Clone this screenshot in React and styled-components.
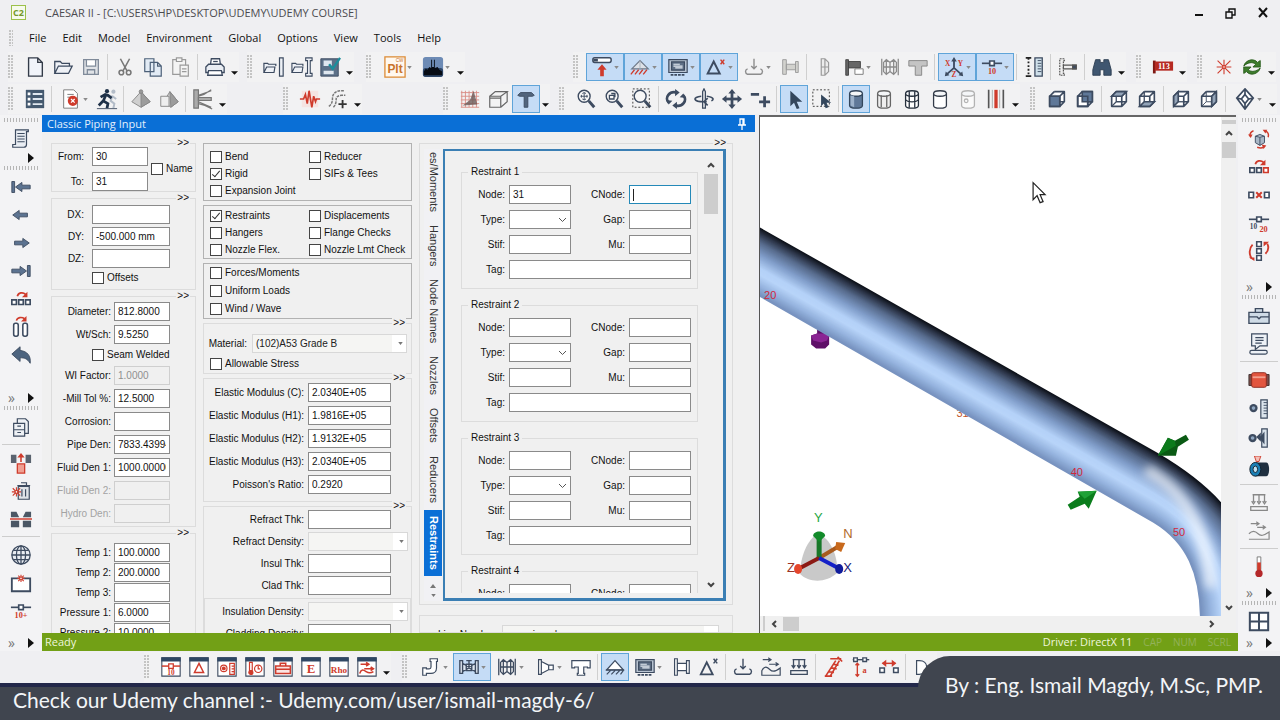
import React from "react";
import styled, { createGlobalStyle, css } from "styled-components";

const ink = "#3d4b60";
const red = "#cf3b2c";
const grey = "#9a9a9a";
const face = "#f0f0f0";
const blue = "#0a6fd6";
const formFont = '"Liberation Sans", Arial, sans-serif';
const uiFont = '"Open Sans", "Noto Sans", sans-serif';

const Global = createGlobalStyle`
  *, *::before, *::after { box-sizing: border-box; }
  body { margin: 0; background: #efeff2; overflow: hidden; }
  button, input, select { font: inherit; color: inherit; margin: 0; }
`;

/* ---------- icons ---------- */

const cube = (
  <g fill="#fff" stroke={ink} strokeWidth="1.8" strokeLinejoin="round">
    <path d="M4 9h11v11H4zM9 4h11v11h-5M4 9l5-5M15 9l5-5M15 20l5-5" />
  </g>
);
const cyl = (stroke, fill, extra) => (
  <g stroke={stroke} strokeWidth="1.4" fill={fill}>
    <path d="M5 6v13c0 1.600 3 3 7 3s7-1.400 7-3V6" />
    <ellipse cx="12" cy="6" rx="7" ry="3" fill="#f4f6f8" />
    {extra}
  </g>
);
const lens = (inner) => (
  <g fill="none" stroke={ink}>
    <circle cx="10" cy="9" r="6.500" strokeWidth="1.500" fill="#f6f6f6" />
    <path d="M15 14l6 7" strokeWidth="3.200" />
    {inner}
  </g>
);
const sheet = (inner) => (
  <g>
    <path d="M2 2h20v20H2z" fill="#fff" stroke={ink} strokeWidth="1.200" />
    <path d="M1.400 1.400h21.200v4.600H1.400z" fill="#2f4764" />
    {inner}
  </g>
);
const squares = (last = ink) => (
  <g fill="#fff" strokeWidth="1.800">
    <path d="M2 13h5v5H2zM9.500 13h5v5h-5z" stroke={ink} />
    <path d="M17 13h5v5h-5z" stroke={last} />
  </g>
);
const letter = (x, y, size, fill, text) => (
  <text x={x} y={y} fontSize={size} fontWeight="700" fill={fill} textAnchor="middle" fontFamily="Liberation Serif, serif">
    {text}
  </text>
);
const screen = (c) => (
  <g stroke={c} fill="none" strokeWidth="1.300">
    <path d="M2 4h20v14H2z" fill="#b9c4d2" />
    <path d="M5 6.500h14v9H5z" fill="#5f7086" />
    <path d="M7 9h7M7 11h10M9 13h8" stroke="#e3e9f1" />
    <path d="M4 20.500h16" strokeWidth="2" strokeDasharray="3 1" />
  </g>
);
const hatch = (
  <g fill="none">
    <path d="M3 14 12 5l9 9z" fill="#dde1e7" stroke="#6d7888" strokeWidth="1.300" />
    <path d="M12 5v9" stroke="#a8b0bb" />
    <path d="M2 20l4-5M6.500 20l4-5M11 20l4-5M15.500 20l4-5" stroke={red} strokeWidth="1.400" />
  </g>
);
const forceDown = (c) => (
  <g fill="none" stroke={c} strokeWidth="1.500">
    <path d="M12 3v11M9 11l3 3 3-3M5 14c-3 1-3 5 0 6h14c3-1 3-5 0-6" />
    <path d="M5 20h14" />
  </g>
);
const bellows = (c) => (
  <g fill="none" stroke={c} strokeWidth="1.400">
    <path d="M3 3v18M21 3v18M5 7l3-3 4 3 4-3 3 3v10l-3 3-4-3-4 3-3-3zM5 12h14M8 4v16M12 7v10M16 4v16" />
  </g>
);
const node = (
  <g>
    <path d="M1 8h22" stroke={ink} strokeWidth="1.800" />
    <path d="M9.500 5.500h5v5h-5z" fill="#fff" stroke={ink} strokeWidth="1.800" />
  </g>
);
const arrowL = <path d="M3 12l7-5v3h9v4h-9v3z" fill="#5c7391" stroke={ink} />;
const arrowR = <path d="M21 12l-7-5v3H5v4h9v3z" fill="#5c7391" stroke={ink} />;
const burst = (cx, cy, r) => (
  <g stroke={red} strokeWidth="1.200">
    <path d={`M${cx - r} ${cy}h${2 * r}M${cx} ${cy - r}v${2 * r}M${cx - r + 1} ${cy - r + 1}l${2 * r - 2} ${2 * r - 2}M${cx - r + 1} ${cy + r - 1}l${2 * r - 2} ${2 - 2 * r}`} />
    <circle cx={cx} cy={cy} r="1.500" fill="#fff" />
  </g>
);
const hook = (
  <g>
    <path d="M8 9c1-4 6-5 9-2" fill="none" stroke={red} strokeWidth="1.800" />
    <path d="M19 4v6h-6z" fill={red} />
  </g>
);

const icons = {
  new: <path d="M5 2h10l5 5v15H5zM15 2v5h5" fill="#f1f4fa" stroke="#333b48" strokeWidth="1.500" />,
  open: <path d="M3 19V6h6l2 2h8v3M3 19l4-8h15l-4 8z" fill="#eef1f6" stroke={ink} strokeWidth="1.400" />,
  save: (
    <g fill="#dfe2e6" stroke="#7f8a99" strokeWidth="1.400">
      <path d="M4 4h16v16H4z" /><path d="M7 4h10v7H7z" fill="#fff" /><path d="M8 15h8v5H8z" />
    </g>
  ),
  cut: (
    <g fill="none" stroke="#777" strokeWidth="1.700">
      <path d="M7 3l7 13M17 3l-7 13" /><circle cx="8" cy="18" r="2.500" /><circle cx="16" cy="18" r="2.500" />
    </g>
  ),
  copy: <path d="M3 3h10v14H3zM9 7h8l4 4v11H9zM17 7v4h4" fill="#e2ebf5" stroke="#4c6078" strokeWidth="1.300" />,
  paste: (
    <g stroke={grey} strokeWidth="1.300" fill="#f4f4f4">
      <path d="M3 4h14v16H3z" /><path d="M7 2h6v4H7z" /><path d="M11 10h9v12h-9z" /><path d="M13 14h5M13 17h5" />
    </g>
  ),
  print: (
    <g stroke={ink} strokeWidth="1.400" fill="#e9edf3">
      <path d="M7 10 8 3h9l1 7" fill="#fff" /><path d="M2 12l3-3h14l3 3v6H2z" /><path d="M5 16h14l1 5H4z" fill="#fff" /><path d="M10 6h5" />
    </g>
  ),
  openPipe: <path d="M1 18V8h4l1 1h8v2M1 18l3-6h9l-1 6zM18 2h4v20h-4z" fill="#eef1f6" stroke={ink} strokeWidth="1.300" />,
  openBeam: <path d="M1 18V8h4l1 1h7v2M1 18l3-6h9l-1 6zM16 2h7v3h-2v14h2v3h-7v-3h2V5h-2z" fill="#eef1f6" stroke={ink} strokeWidth="1.200" />,
  diskCheck: (
    <g>
      <path d="M2 3h19v19H2z" fill="#5d7188" stroke={ink} /><path d="M5 5h9v6H5zM5 16h11v4H5z" fill="#dfe7ef" />
      <path d="M11 9l4 5 8-12" fill="none" stroke="#1b8e9c" strokeWidth="2.600" />
    </g>
  ),
  plt: (
    <g>
      <path d="M1 1h22v22H1z" fill="#fff8ef" stroke="#dc8a35" strokeWidth="1.400" />
      <text x="12" y="18" fontSize="13" fontWeight="700" fill="#c9742a" textAnchor="middle" fontFamily="Liberation Sans, sans-serif">Plt</text>
      <text x="17" y="7" fontSize="5" fill="#c9742a" textAnchor="middle" fontFamily="Liberation Sans, sans-serif">CW</text>
    </g>
  ),
  skyline: (
    <g>
      <rect x="1" y="1" width="22" height="22" rx="3" fill="#6d8bb5" />
      <rect x="1" y="13" width="22" height="10" rx="3" fill="#30486a" />
      <path d="M2 17l2-3 2 1 2-3 2 1V4h1v8h2V4h1v9l3-1 2 3 3 2v4H2z" fill="#070c14" />
    </g>
  ),
  loadUp: (
    <g>
      <rect x="2" y="2" width="20" height="5" rx="2" fill="#fff" stroke={ink} strokeWidth="1.600" /><path d="M2.500 3h5v3h-5z" fill={ink} />
      <path d="M12 9l5 6h-3v7h-4v-7H7z" fill={red} />
    </g>
  ),
  hatch,
  screen: screen(ink),
  delta: (
    <g>
      <path d="M3 19 9.500 6l6.500 13z" fill="none" stroke={ink} strokeWidth="2.200" /><path d="M17 4l4 5M21 4l-4 5" stroke={red} strokeWidth="1.600" />
    </g>
  ),
  forceGrey: forceDown("#8d8d8d"),
  force: forceDown(ink),
  flangeGrey: <path d="M4 4h4v16H4zM8 9h10v6H8zM18 6h3v12h-3z" fill="#d2d2ce" stroke={grey} />,
  disc: <path d="M9 3h4l4 4v10l-4 4H9zM13 3v18M9 12h8" fill="#ececec" stroke={grey} strokeWidth="1.300" />,
  valveBox: (
    <g>
      <path d="M3 4h3v17H3zM6 6h13v7H6z" fill="#666" stroke="#444" /><path d="M13 14h9v6h-9z" fill="#fff" stroke="#777" />
    </g>
  ),
  bellowsGrey: bellows("#8b8b8b"),
  bellows: bellows(ink),
  teeGrey: <path d="M2 5h20v6h-6v10H9V11H2z" fill="#c4c4c4" stroke="#868686" />,
  axes: (
    <g>
      <path d="M12 3v10M12 13l-8 7M12 13l8 7" stroke={ink} strokeWidth="2" /><path d="M12 1l3 5H9zM2 22l1-5 4 4zM22 22l-1-5-4 4z" fill={ink} />
      {letter(5, 11, 8, red, "X")}{letter(19, 11, 8, red, "Y")}{letter(12, 23, 8, red, "Z")}
    </g>
  ),
  node10: <g>{node}{letter(12, 20, 9, red, "10")}</g>,
  node10plus: <g>{node}{letter(12, 20, 9, red, "10+")}</g>,
  node1020: <g>{node}{letter(6, 19, 8, ink, "10")}{letter(17, 22, 9, red, "20")}</g>,
  ruler: (
    <g>
      <path d="M6 2v20" stroke="#222" strokeWidth="2" strokeDasharray="2 2" /><path d="M3 2h6M3 22h6" stroke="#222" strokeWidth="2" />
      <path d="M13 2h8v20h-8z" fill="#cfe0ea" stroke={ink} strokeWidth="1.400" /><path d="M16 5h4M16 8h4M16 11h4M16 14h4M16 17h4" stroke={ink} />
    </g>
  ),
  beam: (
    <g stroke="#555" strokeWidth="1.300" fill="#eee">
      <path d="M3 3h5v2H7v14h1v2H3z" strokeDasharray="2 1" /><path d="M7 10h14v4H7z" /><path d="M17 10h4v4h-4z" fill={ink} />
    </g>
  ),
  binoc: <path d="M5 4h5v3h4V4h5l3 11v6h-8v-6h-4v6H2v-6z" fill="#3f5670" stroke="#2d3e52" />,
  tag113: (
    <g>
      <path d="M1 5h3v14H1z" fill="#7e1813" /><path d="M3 6h20v10H3z" fill="#b62a22" />
      {letter(13, 14, 9, "#fff", "113")}
    </g>
  ),
  spark: <g>{burst(12, 12, 8)}</g>,
  refresh: (
    <g fill="#3d7d2c" stroke="#2a5c1c">
      <path d="M3 11c2-7 11-9 15-4l3-2v7h-8l3-3C13 6 7 7 3 11z" /><path d="M21 13c-2 7-11 9-15 4l-3 2v-7h8l-3 3c3 3 9 2 13-2z" />
    </g>
  ),
  list: (
    <g>
      <path d="M2 2h20v20H2z" fill="#44596f" /><path d="M4 5h3v3H4zM4 10.500h3v3H4zM4 16h3v3H4z" fill="#fff" />
      <path d="M9.500 6.500H20M9.500 12H20M9.500 17.500H20" stroke="#dfe7ef" strokeWidth="2" />
    </g>
  ),
  docError: (
    <g>
      <path d="M4 2h11l4 4v16H4zM8 7h7M8 10h7" fill="#fff" stroke="#777" /><circle cx="14" cy="14" r="5.500" fill={red} />
      <path d="M12 12l4 4M16 12l-4 4" stroke="#fff" strokeWidth="1.400" />
    </g>
  ),
  run: (
    <g>
      <g stroke="#b3bcc8" fill="none" strokeWidth="2.200"><circle cx="19" cy="4" r="1.200" /><path d="M18 8l-2 6 4 3-1 5M18 9l4 3" /></g>
      <circle cx="12" cy="3.500" r="2.300" fill="#1f3148" />
      <path d="M11 7 8 14l5 3-1 5M8 14l-5 5M5 10l5-3 3 1 4 3" fill="none" stroke="#1f3148" strokeWidth="3" />
      <path d="M1 22.500h22" stroke={ink} />
    </g>
  ),
  pyramid: <g stroke="#858585"><path d="M12 4 2 15l10 6 10-6z" fill="#cfcfcf" /><path d="M12 4v17l10-6z" fill="#9c9c9c" /><circle cx="12" cy="4" r="2" fill="#999" /></g>,
  pyramidBox: <g stroke="#858585"><path d="M13 4 6 15l8 6 8-6z" fill="#cfcfcf" /><path d="M13 4l1 17 8-6z" fill="#9c9c9c" /><path d="M3 9h9v11H3z" fill="#eee" /></g>,
  anchor: (
    <g fill="none" stroke="#777" strokeWidth="1.300">
      <path d="M2 2h5v20H2z" fill="#aaa" /><path d="M7 9l6-2 8-5M7 8l14-5M7 15l14 6M7 17l7 2 8 4" /><path d="M7 10.500h14v3H7z" fill="#bbb" />
    </g>
  ),
  wave: (
    <g fill="none">
      <path d="M3 3h18v18H3z" fill="#f5e4e2" /><path d="M1 12h4l2-5 2 10 2-14 3 18 2-12 2 6 1-3h4" stroke={red} strokeWidth="1.800" />
    </g>
  ),
  pipeAdd: (
    <g fill="none" stroke="#777">
      <path d="M2 20c3-2 4-5 4-9s3-8 9-8h4M7 21c3-3 3-7 3-9s2-4 6-4h4" strokeDasharray="3 1" strokeWidth="1.600" /><path d="M17 13v9M12.500 17.500h9" stroke="#333" strokeWidth="2" />
    </g>
  ),
  gridPen: (
    <g>
      <path d="M3 3v18M7 3v18M11 3v18M15 3v18M19 3v18M2 5h20M2 9h20M2 13h20M2 17h20M2 21h20" stroke="#d98d86" /><path d="M4 19 12 13 16 3l4 15z" fill="#6b5b5a" opacity="0.800" />
    </g>
  ),
  boxOpen: <path d="M3 9h12v12H3zM3 9l6-5h13l-7 5M22 4v11l-7 6M3 11h12" fill="#f3f3f3" stroke="#666" strokeWidth="1.300" />,
  teeDark: <path d="M3 8l3-3h12l3 3-2 1h-5v12h-4V9H5z" fill="#52657d" stroke={ink} />,
  zoomAll: lens(<path d="M10 5v8M6 9h8M8 6l2-1 2 1M8 12l2 1 2-1M7 7.500v3M13 7.500v3" />),
  zoomBox: lens(<path d="M7 8h5v4H7zM9 6h4v4" strokeWidth="1.400" />),
  zoomArea: <g>{lens(null)}<path d="M2 1h18v20H2z" fill="none" stroke="#333" strokeDasharray="2 2" /></g>,
  rotate: (
    <g fill="none" stroke={ink} strokeWidth="3">
      <path d="M4 16a8 7 0 0 1 9-11M20 8a8 7 0 0 1-9 11" /><path d="M11 1l5 4-5 4zM13 15l-5 4 5 4z" fill={ink} stroke="none" /><path d="M1 13l3 5 4-4zM23 11l-3-5-4 4z" fill={ink} stroke="none" />
    </g>
  ),
  orbit: (
    <g fill="none" stroke={ink} strokeWidth="1.800">
      <path d="M10.500 22V4L12 1l1.500 3v18z" strokeWidth="1.400" /><path d="M9 9c-10 1-9 6 3 6h3M15 9c8 1 8 4 5 5M16 11l-4 4 4 4" />
    </g>
  ),
  pan: (
    <g fill={ink}>
      <path d="M12 1l4 5H8zM12 23l4-5H8zM1 12l5-4v8zM23 12l-5-4v8z" /><path d="M10.500 5h3v14h-3z" /><path d="M5 10.500h14v3H5z" />
    </g>
  ),
  plusMinus: <path d="M2 7h9M17 9v12M11 15h12" stroke={ink} strokeWidth="3" />,
  cursor: <path d="M8 3v17l4-4 3 7 3-1-3-7h6z" fill="#33465c" />,
  cursorBox: <g><path d="M2 2h18v18H2z" fill="none" stroke="#333" strokeDasharray="2 2" /><path d="M11 7v13l3-3 2 5 3-1-2-5h5z" fill="#33465c" /></g>,
  cylSolid: <g>{cyl("#33465c", "#5f7898", <path d="M6 8v11l4 2V9z" fill="#9db2ca" stroke="none" />)}</g>,
  cylLines: cyl("#666", "#eee", <path d="M9 8v13M15 8v13" />),
  cylWire: cyl("#26303d", "#fff", <path d="M9 3.500v18M15 3.500v18M5 13c3 3 11 3 14 0" fill="none" />),
  cylOpen: cyl("#333b48", "#fff", null),
  cylDot: cyl("#b3b3b3", "#fafafa", <circle cx="10" cy="14" r="2" />),
  bars: (
    <g>
      <path d="M4 2v20M20 2v20" stroke="#555" strokeWidth="1.800" /><path d="M12 2v20" stroke={red} strokeWidth="3.600" /><path d="M16 2v20M8 2v20" stroke="#aaa" />
    </g>
  ),
  cubeFront: <g>{cube}<path d="M4 9h11v11H4z" fill="#5f7898" stroke={ink} strokeWidth="1.800" /></g>,
  cubeBack: <g>{cube}<path d="M9 4h11v11H9z" fill="#5f7898" stroke={ink} strokeWidth="1.800" /><path d="M4 9h11v11H4z" fill="none" stroke={ink} strokeWidth="1.800" /></g>,
  cubeTop: <g>{cube}<path d="M4 9l5-5h11l-5 5z" fill="#93a4b8" stroke={ink} strokeWidth="1.800" /><path d="M9 9v6h6M4 20l5-5" fill="none" stroke={ink} strokeWidth="1.400" /></g>,
  cubeBottom: <g>{cube}<path d="M4 20l5-5h11l-5 5z" fill="#93a4b8" stroke={ink} strokeWidth="1.800" /><path d="M9 4v11" stroke={ink} strokeWidth="1.400" /></g>,
  cubeLeft: <g>{cube}<path d="M4 9l5-5v11l-5 5z" fill="#93a4b8" stroke={ink} strokeWidth="1.800" /><path d="M9 15h6" stroke={ink} strokeWidth="1.400" /></g>,
  cubeRight: <g>{cube}<path d="M15 9l5-5v11l-5 5z" fill="#93a4b8" stroke={ink} strokeWidth="1.800" /><path d="M9 4v11h6M4 20l5-5" fill="none" stroke={ink} /></g>,
  cubeIso: <g fill="#fff" stroke={ink} strokeWidth="1.800"><path d="M12 1l9 10-9 12-9-12zM12 1v6M12 17v6M3 11l5 1M21 11l-5 1" /><path d="M12 7l4 5-4 5-4-5z" /></g>,
  sheetNode: sheet(<g><path d="M2 11h20" stroke={red} strokeWidth="1.600" /><path d="M9.500 8.500h5v5h-5z" fill="#fff" stroke={red} strokeWidth="1.400" />{letter(12, 21, 8, red, "10")}</g>),
  sheetDelta: sheet(<path d="M7 18l5-10 5 10z" fill="none" stroke={red} strokeWidth="1.600" />),
  sheetDot: sheet(<g stroke={red} fill="none" strokeWidth="1.300"><circle cx="8.500" cy="13.500" r="3.500" /><circle cx="8.500" cy="13.500" r="1.500" fill={red} /><path d="M15 8h5v12h-5zM17 11h3M17 14h3M17 17h3" /></g>),
  sheetTherm: sheet(<g stroke={red} fill="none" strokeWidth="1.300"><path d="M6 7h3v9H6z" /><circle cx="7.500" cy="18" r="2.200" fill={red} /><circle cx="15.500" cy="14" r="4" /><path d="M15.500 11v3h2" /></g>),
  sheetCase: sheet(<path d="M4 11h16v8H4zM9 11V8h6v3M4 14.500h16" fill="#fbe4e1" stroke={red} strokeWidth="1.600" />),
  sheetE: sheet(letter(12, 19, 14, red, "E")),
  sheetRho: sheet(letter(12, 18, 10, red, "Rho")),
  sheetWind: sheet(<path d="M5 9h9M11 7l3 2-3 2M9 14h10M16 12l3 2-3 2M4 19c2-5 4-4 7-2s5 2 8 0" fill="none" stroke={red} strokeWidth="1.700" />),
  elbow: <path d="M11 3h8v3h-1v7c0 4-3 6-6 6H7v2H3v-8h4v1h3c1 0 2-1 2-2V6h-1z" fill="#fff" stroke={ink} strokeWidth="1.300" />,
  valve: <path d="M2 5h3v14H2zM19 5h3v14h-3zM5 8l7 4 7-4v9l-7-4-7 4zM12 5v8M9 5h6M9 9h6v7H9z" fill="#dfe7f0" stroke={ink} strokeWidth="1.500" />,
  reducer: <path d="M5 4h3v16H5zM8 6l8 4v5l-8 4zM16 10h5v5h-5" fill="#fff" stroke={ink} strokeWidth="1.300" />,
  tee: <path d="M2 5h20v8h-3v-1h-4v7h1v2H8v-2h1v-7H5v1H2z" fill="#fff" stroke={ink} strokeWidth="1.300" />,
  support: <g fill="none" stroke={ink} strokeWidth="1.300"><path d="M3 15 12 5l9 10z" fill="#fff" /><path d="M2 15.500h20M3 20l4-4M8 20l4-4M13 20l4-4M18 20l3-4" /></g>,
  flange: <path d="M5 3h3v18H5zM8 8h10v8H8zM18 5h3v14h-3z" fill="#fff" stroke={ink} strokeWidth="1.300" />,
  deltaDark: <g fill="none" stroke={ink}><path d="M3 20 9.500 7l6.500 13z" strokeWidth="2" /><path d="M17 3l4 5M21 3l-4 5" strokeWidth="1.600" /></g>,
  wind: <path d="M3 4h8M9 2l3 2-3 2M10 9h9M17 7l3 2-3 2M2 16c3-6 6-4 9-1s6 2 11-2v8H2z" fill="none" stroke={ink} strokeWidth="1.300" />,
  windGrey: <path d="M3 4h9M9 2l3 2-3 2M10 8h9M16 6l3 2-3 2M1 15c4-4 7-3 10 0s6 2 12-2v8H1" fill="none" stroke="#888" strokeWidth="1.300" />,
  loads: <path d="M5 4h14M6 4v8M12 4v8M18 4v8M4 10l2 3 2-3M10 10l2 3 2-3M16 10l2 3 2-3M3 16h18v4H3z" fill="none" stroke={ink} strokeWidth="1.400" />,
  loadsGrey: <path d="M5 3h14M6 3v8M12 3v8M18 3v8M4 10l2 3 2-3M10 10l2 3 2-3M16 10l2 3 2-3M3 16h18v4H3z" fill="none" stroke="#888" strokeWidth="1.400" />,
  slash: <path d="M4 22 15 5M9 22 19 5M3 22h8M7 17l6 1M10 13l6 1M12 9l6 1M9 3h12M17 1l5 5" fill="none" stroke={red} strokeWidth="1.800" />,
  measure: <g fill="none" strokeWidth="1.500"><path d="M3 4h18" stroke={ink} /><path d="M4 2h4v4H4zM14 2h4v4h-4z" fill="#fff" stroke={ink} /><path d="M8 8v14M6 10l2-2 2 2M6 20l2 2 2-2" stroke={red} />{letter(16, 19, 9, red, "a")}</g>,
  nodesRed: <g fill="#fff" strokeWidth="1.600"><path d="M2 13h5v5H2zM17 13h5v5h-5z" stroke={ink} /><path d="M5 8h14" stroke={red} /><path d="M9 4v8L4 8zM15 4v8l5-4z" fill={red} /></g>,
  valveEnd: <path d="M5 5h3c5 0 8 3 8 7s-3 8-8 8H5z" fill="#fff" stroke={ink} strokeWidth="1.300" />,
  scroll: <path d="M6 2h14v2h-2v14c0 2-1 3-3 3H3v-3h3zM8 6h8M8 9h8M8 12h8M8 15h8" fill="#e9edf3" stroke={ink} strokeWidth="1.300" />,
  first: <g><path d="M2 6h3v12H2z" fill="#5c7391" stroke={ink} /><g transform="translate(3 0)">{arrowL}</g></g>,
  prev: arrowL,
  next: arrowR,
  last: <g><path d="M19 6h3v12h-3z" fill="#5c7391" stroke={ink} /><g transform="translate(-3 0)">{arrowR}</g></g>,
  nodesJump: <g>{squares()}{hook}</g>,
  nodesJumpRed: <g>{squares(red)}{hook}</g>,
  nodesX: <g strokeWidth="1.800"><path d="M1 9h5v6H1zM18 9h5v6h-5z" fill="#fff" stroke={ink} /><path d="M9 9l6 6M9 15l6-6" stroke={red} strokeWidth="2.200" /></g>,
  tubesJump: <g><rect x="4" y="8" width="5" height="14" rx="2" fill="#fff" stroke={ink} strokeWidth="1.700" /><rect x="14" y="8" width="5" height="14" rx="2" fill="#fff" stroke={ink} strokeWidth="1.700" /><path d="M7 5c1-4 6-4 9-2" fill="none" stroke={red} strokeWidth="1.700" /><path d="M18 0v6h-6z" fill={red} /></g>,
  undo: <path d="M2 11l9-8v4c8 1 12 6 11 14-3-5-6-6-11-6v4z" fill="#4d647f" stroke={ink} />,
  cabinet: <path d="M4 8h12v14H4zM8 8V3h9l3 3v13h-4M4 15h12M8 11h4M8 18h4" fill="#eef1f5" stroke={ink} strokeWidth="1.300" />,
  insert: <g><path d="M1 3h6v9H1zM17 3h6v9h-6z" fill="#5a636f" /><path d="M12 4v7" stroke={red} strokeWidth="1.700" /><path d="M12 1l4 5H8z" fill={red} /><path d="M8 13h8v10H8z" fill="#f0a093" stroke={red} strokeWidth="1.400" /></g>,
  trash: <g><path d="M9 7h12v14H9zM8 6h14M12 3h6v3M13 10v8M17 10v8" fill="#dfe3e8" stroke={ink} strokeWidth="1.300" />{burst(7, 13, 5)}</g>,
  split: <g><path d="M1 4h6l3 6H1zM14 10l3-6h6v6zM1 14h9v7H1zM14 14h9v7h-9z" fill="#4b5765" /><path d="M0 12h24" stroke={red} strokeWidth="1.600" /></g>,
  globe: <g fill="#e8ecf2" stroke={ink} strokeWidth="1.400"><circle cx="12" cy="12" r="10" /><path d="M12 2v20M2 12h20M4 7h16M4 17h16" /><ellipse cx="12" cy="12" rx="5" ry="10" fill="none" /></g>,
  boxSpark: <g><path d="M2 7h20v14H2z" fill="#fff" stroke={ink} strokeWidth="2" />{burst(12, 7, 4)}</g>,
  rotCube: (
    <g fill="none">
      <path d="M8 9l5-2 5 2v7l-5 3-5-3zM13 10v9M8 9l5 1 5-1" fill="#a9b7c6" stroke={ink} />
      <path d="M6 3C3 4 2 6 2 9M18 3c4 1 5 4 4 7M10 21c3 1 5 1 7 0" stroke={red} strokeWidth="1.600" />
      <path d="M0 7h5l-2 4zM16 2h5l-2 4zM15 18l5 1-3 4z" fill={red} />
    </g>
  ),
  nodesVert: <g fill="#fff" strokeWidth="1.700"><path d="M9.500 2h5v5h-5zM9.500 9.500h5v5h-5zM9.500 17h5v5h-5z" stroke={ink} /><path d="M5 5c-4 4-4 11-1 15M19 15c3-3 4-7 2-11" fill="none" stroke={red} strokeWidth="2" /><path d="M1 19h6v4zM17 7V2h6z" fill={red} /></g>,
  briefcase: <path d="M1 8h22v12H1zM8 8V4h8v4M1 13h9l2 2 2-2h9" fill="#cfdbe6" stroke={ink} strokeWidth="1.500" />,
  speech: <g fill="#edf1f6" stroke={ink} strokeWidth="1.300"><path d="M4 1h17v13H13l-5 4v-4H4z" /><path d="M8 5h9M8 8h9M8 11h7" /><rect x="2" y="19" width="19" height="4" rx="2" /></g>,
  pipeRed: <g><path d="M1 6h4v12H1zM19 6h4v12h-4z" fill="#7d4a47" stroke="#3d3030" /><rect x="4" y="4" width="16" height="16" rx="2" fill="#e2553f" stroke="#8b2b20" /><path d="M5 9h14" stroke="#f3a08f" strokeWidth="2" /></g>,
  dotRuler: <g><circle cx="6" cy="11" r="4.500" fill={ink} /><circle cx="6" cy="11" r="2" fill="#8ea6c0" /><path d="M14 2h7v20h-7z" fill="#dbe4ec" stroke={ink} strokeWidth="1.300" /><path d="M17 5h4M17 8h4M17 11h4M17 14h4M17 17h4" stroke={ink} /></g>,
  dotRuler2: <g><circle cx="5" cy="12" r="4.500" fill={ink} /><circle cx="5" cy="12" r="2" fill="#8ea6c0" /><path d="M15 2h6v20h-6z" fill="#dbe4ec" stroke={ink} strokeWidth="1.300" /><path d="M9 11l5-5v4l4-5v14l-4-5v2z" fill={ink} /></g>,
  pipeProbe: <g><path d="M7 0h7l-2 6H9z" fill="#f3c1ba" stroke={red} /><path d="M8 7h12c4 0 4 15 0 15H8z" fill="#1f2f40" /><ellipse cx="8" cy="14.500" rx="6" ry="7.500" fill="#1b7fb5" stroke="#101c28" /><ellipse cx="8" cy="14.500" rx="2.500" ry="3.500" fill="#bfe2f4" stroke="#101c28" /></g>,
  thermo: <g><path d="M10 1h4v14h-4z" fill="#fff" stroke="#777" /><path d="M10 7h4v9h-4z" fill={red} /><circle cx="12" cy="19" r="4" fill="#b4282a" /></g>,
  panes: <path d="M2 2h20v19H2zM12 2v19M2 11.500h20" fill="#fff" stroke={ink} strokeWidth="2.200" />,
};

const Glyph = styled.svg`
  display: block;
  flex: none;
  width: ${(p) => p.$w || 24}px;
  height: ${(p) => p.$h || 24}px;
`;

/* ---------- toolbars ---------- */

const Shell = styled.div`
  position: relative;
  display: flex;
  flex-direction: column;
  height: 100vh;
  min-width: 0;
  overflow: hidden;
  color: #111;
  font: 12px/16px ${uiFont};
`;
const TitleBar = styled.header`
  display: flex;
  align-items: center;
  flex: none;
  height: 25px;
  padding: 0 1px 0 11px;
  color: #4b4b4f;
`;
const AppMark = styled.span`
  width: 15px;
  height: 15px;
  border: 1px solid #9cc04a;
  background: #f6faec;
  color: #74982a;
  font: 700 9px/13px ${uiFont};
  text-align: center;
`;
const AppTitle = styled.h1`
  flex: 1;
  margin: 0 0 0 19px;
  font: 400 11px/16px ${uiFont};
  white-space: nowrap;
`;
const WindowButton = styled.button`
  display: grid;
  place-items: center;
  width: 32px;
  height: 24px;
  padding: 0;
  border: 0;
  background: none;
`;
const MenuBar = styled.nav`
  display: flex;
  align-items: center;
  flex: none;
  gap: 16px;
  height: 26px;
  padding-left: 9px;
  font: 11px/16px ${uiFont};
`;
const MenuGrip = styled.span`
  width: 4px;
  height: 16px;
  background: radial-gradient(circle at 1px 1px, #c4c4c4 1px, transparent 1px) 0 0 / 3px 3px;
`;
const MenuItem = styled.button`
  padding: 0;
  border: 0;
  background: none;
`;
const ToolRow = styled.div`
  display: flex;
  align-items: center;
  flex: none;
  height: 32px;
  padding-left: 8px;
  overflow: hidden;
`;
const ToolGroup = styled.div`
  display: flex;
  align-items: center;
  flex: none;
  height: 30px;
  margin-left: ${(p) => p.$space || 0}px;
  background: #f2f2f3;
`;
const Grip = styled.span`
  width: 13px;
  height: 24px;
  padding-right: 8px;
  background: radial-gradient(circle at 1px 1px, #c4c4c4 1px, transparent 1px) 0 0 / 3px 3px content-box;
`;
const ToolButton = styled.button`
  display: flex;
  align-items: center;
  justify-content: center;
  gap: 1px;
  width: ${(p) => (p.$caret ? 38 : 28)}px;
  height: 28px;
  padding: 0;
  border: 1px solid ${(p) => (p.$on ? "#5fa4d9" : "transparent")};
  background: ${(p) => (p.$on ? "#c5dcf6" : "none")};
`;
const Divider = styled.span`
  width: 6px;
  height: 26px;
  background: linear-gradient(#cfcfcf, #cfcfcf) 2px 0 / 1px 100% no-repeat;
`;
const MoreButton = styled.button`
  display: grid;
  place-items: end center;
  width: 10px;
  height: 24px;
  padding: 0 0 4px;
  border: 0;
  background: none;
`;

const Icon = ({ name, size = 22 }) => (
  <Glyph $w={size} $h={size} viewBox="0 0 24 24" aria-hidden="true">{icons[name]}</Glyph>
);
const Caret = ({ color = "#8a8a8a" }) => (
  <Glyph $w={5} $h={3} viewBox="0 0 6 4" aria-hidden="true"><path d="M0 0h6L3 4z" fill={color} /></Glyph>
);

/* "*" marks a pressed tool, "^" one with a drop-down arrow, "|" a divider, "v" the overflow arrow */
function Tools({ space, items }) {
  return (
    <ToolGroup $space={space} role="toolbar">
      <Grip />
      {items.split(" ").map((item, i) => {
        if (item === "|") return <Divider key={i} />;
        if (item === "v")
          return (
            <MoreButton key={i} aria-label="More buttons">
              <Glyph $w={7} $h={4} viewBox="0 0 8 4"><path d="M0 0h8L4 4z" fill="#111" /></Glyph>
            </MoreButton>
          );
        const name = item.replace(/[*^]/g, "");
        const caret = item.endsWith("^");
        return (
          <ToolButton key={i} aria-label={name} $on={item.startsWith("*")} $caret={caret}>
            <Icon name={name} />
            {caret && <Caret />}
          </ToolButton>
        );
      })}
    </ToolGroup>
  );
}

/* ---------- side rails ---------- */

const Middle = styled.div`
  display: flex;
  flex: 1;
  min-height: 0;
`;
const Rail = styled.aside`
  display: flex;
  flex-direction: column;
  align-items: center;
  flex: none;
  width: 42px;
  overflow: hidden;
  padding-bottom: 3px;
  background: #f3f3f5;
`;
const RailGrip = styled.span`
  flex: none;
  width: 34px;
  height: 10px;
  padding: 3px 0;
  background: repeating-linear-gradient(90deg, #b5b5b5 0 1px, transparent 1px 3px) content-box;
`;
const RailButton = styled.button`
  display: flex;
  align-items: center;
  justify-content: center;
  flex: none;
  width: 42px;
  height: ${(p) => (p.$tall ? 29 : 28)}px;
  padding: 0;
  border: 0;
  background: none;
`;
const RailDivider = styled.span`
  flex: none;
  width: 38px;
  height: 8px;
  background: linear-gradient(#cdcdcd, #cdcdcd) 0 3px / 100% 1px no-repeat;
`;
const RailMore = styled.button`
  display: flex;
  align-items: center;
  justify-content: ${(p) => (p.$single ? "flex-end" : "space-between")};
  flex: none;
  width: 26px;
  height: 10px;
  margin-top: ${(p) => p.$top};
  padding: 0;
  border: 0;
  background: none;
  color: #777;
  font: 14px/10px ${uiFont};
`;

function RailTools({ items }) {
  return items.map((item, i) => {
    if (item === "grip") return <RailGrip key={i} />;
    if (item === "|") return <RailDivider key={i} />;
    if (item.more)
      return (
        <RailMore key={i} $top={item.more} $single={item.single} aria-label="More buttons">
          {!item.single && <span>»</span>}
          <Glyph $w={6} $h={10} viewBox="0 0 6 10"><path d="M0 0l6 5-6 5z" fill="#111" /></Glyph>
        </RailMore>
      );
    return (
      <RailButton key={i} aria-label={item.name || item} $tall={item.tall}>
        <Icon name={item.name || item} />
      </RailButton>
    );
  });
}

const leftRail = [
  "grip", "scroll", { more: "0px", single: true }, "grip",
  "first", "prev", "next", "last", "nodesJump", "tubesJump", "undo", { more: "24px" }, "grip",
  "cabinet", "|", "insert", "trash", "split", "|", "globe", "boxSpark", "node10plus", { more: "auto" },
];
const rightRail = [
  "grip", "rotCube", "nodesJumpRed", "nodesX", "node1020", "nodesVert", { more: "17px" }, "grip",
  "briefcase", "speech", "|", "pipeRed", { name: "dotRuler", tall: true }, { name: "dotRuler2", tall: true },
  { name: "pipeProbe", tall: true }, "|", "loadsGrey", "windGrey", "|", "thermo", { more: "7px" }, "grip", "panes", { more: "auto" },
];

/* ---------- input form ---------- */

const Center = styled.main`
  display: flex;
  flex-direction: column;
  flex: 1;
  min-width: 0;
`;
const Workspace = styled.div`
  display: flex;
  flex: 1;
  gap: 4px;
  min-height: 0;
`;
const InputPanel = styled.section`
  display: flex;
  flex-direction: column;
  flex: none;
  width: 713px;
  background: ${face};
  color: #111;
  font: 10px/14px ${formFont};
`;
const PanelTitle = styled.h2`
  display: flex;
  align-items: center;
  justify-content: space-between;
  flex: none;
  height: 17px;
  margin: 0;
  padding: 0 8px 0 5px;
  background: ${blue};
  color: #e4f0fc;
  font: 400 11px/16px ${uiFont};
`;
const PanelBody = styled.div`
  display: flex;
  flex: 1;
  gap: 7px;
  min-height: 0;
  padding: 11px 22px 0 9px;
  overflow: hidden;
`;
const Column = styled.div`
  display: flex;
  flex-direction: column;
  flex: none;
  gap: ${(p) => p.$gap}px;
  width: ${(p) => p.$width}px;
`;
const Box = styled.div`
  position: relative;
  display: flex;
  flex-direction: column;
  flex: none;
  gap: ${(p) => p.$gap || 0}px;
  padding: ${(p) => p.$pad || "0"};
  border: 1px solid ${(p) => (p.$strong ? "#b2b2b2" : "#dcdcdc")};
`;
const Expand = styled.button`
  position: absolute;
  top: -7px;
  right: 5px;
  padding: 0 1px;
  border: 0;
  background: ${face};
  font: 10px/12px ${formFont};
`;
const FieldRow = styled.div`
  display: grid;
  grid-template-columns: ${(p) => p.$label}px auto;
  column-gap: ${(p) => p.$space || 4}px;
  align-items: center;
  justify-content: start;
  height: 19px;
`;
const Label = styled.label`
  text-align: right;
  white-space: nowrap;
  color: ${(p) => (p.$off ? "#a3a3a3" : "#111")};
`;
const TextBox = styled.input`
  width: ${(p) => (p.$width ? `${p.$width}px` : "100%")};
  height: 19px;
  padding: 0 3px;
  border: 1px solid #8a8a8a;
  border-radius: 0;
  background: #fff;
  outline: 0;
  ${(p) => p.$focus && css`
    border-color: #2489b8;
    background: linear-gradient(#222, #222) 3px 3px / 1px 12px no-repeat #fff;
  `}
  &:disabled { border-color: #cfcfcf; background: ${face}; color: #8f8f8f; }
`;
const SelectFrame = styled.span`
  display: grid;
  align-items: center;
  width: ${(p) => (p.$width ? `${p.$width}px` : "100%")};
  & > * { grid-area: 1 / 1; }
  & > svg { justify-self: end; margin-right: 4px; }
`;
const Select = styled.select`
  width: 100%;
  height: 19px;
  padding: 0 3px;
  appearance: none;
  border: 1px solid ${(p) => (p.$flat ? "#d8d8d8" : "#8a8a8a")};
  border-radius: 0;
  background: ${(p) => (p.$flat ? "linear-gradient(90deg, transparent calc(100% - 14px), #fff 0) #f5f5f3" : "#fff")};
  color: #222;
`;
const CheckLabel = styled.label`
  display: flex;
  align-items: center;
  gap: 3px;
  height: ${(p) => p.$height || 14}px;
  margin-left: ${(p) => p.$indent || 0}px;
  white-space: nowrap;
`;
const Tick = styled.input`
  display: grid;
  place-items: center;
  flex: none;
  width: 12px;
  height: 12px;
  appearance: none;
  border: 1px solid #444;
  background: #fff;
  &:checked::after {
    content: "";
    width: 4px;
    height: 8px;
    margin-top: -2px;
    border: solid #333;
    border-width: 0 1px 1px 0;
    transform: rotate(40deg);
  }
`;
const CheckGrid = styled.div`
  display: grid;
  grid-template-columns: 99px auto;
  justify-content: start;
`;
const NodeRow = styled.div`
  display: flex;
  align-items: center;
  gap: 3px;
`;
const Stack = styled.div`
  display: flex;
  flex-direction: column;
  gap: 6px;
`;

const Check = ({ text, height, indent, on }) => (
  <CheckLabel $height={height} $indent={indent}>
    <Tick type="checkbox" defaultChecked={on} />
    {text}
  </CheckLabel>
);
const Drop = ({ id, value = "", flat, width }) => (
  <SelectFrame $width={width}>
    <Select id={id} $flat={flat} defaultValue={value}><option>{value}</option></Select>
    {flat ? <Caret color="#777" /> : (
      <Glyph $w={9} $h={6} viewBox="0 0 9 6"><path d="M1 1l3.500 3.500L8 1" fill="none" stroke="#555" /></Glyph>
    )}
  </SelectFrame>
);
function Field({ label, value = "", col, space, width, off, select }) {
  const id = React.useId();
  return (
    <FieldRow $label={col} $space={space}>
      <Label htmlFor={id} $off={off && !value}>{label}</Label>
      {select ? <Drop id={id} value={value} flat width={width} /> : <TextBox id={id} defaultValue={value} disabled={off} $width={width} />}
    </FieldRow>
  );
}

const TabGroup = styled(Box)`
  flex: 1;
  flex-direction: row;
  gap: 1px;
  min-height: 0;
  padding: 5px 6px 3px 4px;
`;
const TabStrip = styled.div`
  display: flex;
  flex-direction: column;
  justify-content: flex-end;
  align-items: center;
  flex: none;
  width: 18px;
  gap: 1px;
  overflow: hidden;
  background: #f1f1f4;
`;
const Tab = styled.button`
  flex: none;
  width: 18px;
  padding: 6px 0;
  border: 0;
  background: ${(p) => (p.$on ? blue : "none")};
  color: ${(p) => (p.$on ? "#fff" : "#333")};
  font: ${(p) => (p.$on ? 700 : 400)} 11px/17px ${formFont};
  writing-mode: vertical-rl;
`;
const TabArrows = styled.div`
  display: flex;
  flex-direction: column;
  align-items: center;
  gap: 6px;
  padding: 7px 0 4px;
`;
const TabPage = styled.div`
  display: flex;
  flex: 1;
  gap: 5px;
  min-width: 0;
  padding: 6px 5px 5px 16px;
  border: solid #3b7fb4;
  border-width: 2px 3px 3px 2px;
`;
const RestraintList = styled.div`
  display: flex;
  flex-direction: column;
  flex: 1;
  gap: 10px;
  padding-top: 9px;
  overflow: hidden;
`;
const RestraintSet = styled.fieldset`
  flex: none;
  min-width: 0;
  margin: 0;
  padding: 7px 0 9px;
  border: 1px solid #dcdcdc;
`;
const Legend = styled.legend`
  margin-left: 6px;
  padding: 0 3px;
  line-height: 12px;
`;
const RestraintGrid = styled.div`
  display: grid;
  grid-template-columns: 43px 62px 50px 62px;
  gap: 6px 4px;
  align-items: center;
`;
const WideCell = styled.div`
  grid-column: span 3;
  display: grid;
`;
const LineBox = styled(Box)`
  height: 18px;
  overflow: hidden;
  padding-top: 9px;
`;

function Restraint({ number, nodeValue, focus }) {
  const id = React.useId();
  return (
    <RestraintSet>
      <Legend>Restraint {number}</Legend>
      <RestraintGrid>
        <Label htmlFor={id + "n"}>Node:</Label><TextBox id={id + "n"} defaultValue={nodeValue} />
        <Label htmlFor={id + "c"}>CNode:</Label><TextBox id={id + "c"} $focus={focus} />
        <Label htmlFor={id + "t"}>Type:</Label><Drop id={id + "t"} />
        <Label htmlFor={id + "g"}>Gap:</Label><TextBox id={id + "g"} />
        <Label htmlFor={id + "s"}>Stif:</Label><TextBox id={id + "s"} />
        <Label htmlFor={id + "m"}>Mu:</Label><TextBox id={id + "m"} />
        <Label htmlFor={id + "a"}>Tag:</Label><WideCell><TextBox id={id + "a"} /></WideCell>
      </RestraintGrid>
    </RestraintSet>
  );
}

/* ---------- scroll bars ---------- */

const ScrollTrack = styled.div`
  display: flex;
  flex-direction: ${(p) => (p.$across ? "row" : "column")};
  align-items: center;
  justify-content: space-between;
  flex: none;
  ${(p) => (p.$across ? "height: 15px; padding: 0 3px;" : "width: 15px; padding: 3px 0;")}
  background: ${face};
`;
const ScrollHead = styled.div`
  display: flex;
  flex-direction: ${(p) => (p.$across ? "row" : "column")};
  align-items: center;
  gap: 4px;
`;
const Thumb = styled.span`
  width: ${(p) => p.$w}px;
  height: ${(p) => p.$h}px;
  background: #cdcdcd;
`;
const Chevron = ({ d }) => (
  <Glyph $w={10} $h={10} viewBox="0 0 10 10" aria-hidden="true"><path d={d} fill="none" stroke="#444" strokeWidth="2" /></Glyph>
);

/* ---------- model view ---------- */

const Viewer = styled.section`
  display: flex;
  flex-direction: column;
  flex: 1;
  min-width: 0;
  margin-right: 2px;
  border-left: 1px solid #555;
  border-top: 2px solid #666;
  background: ${face};
`;
const ViewTop = styled.div`
  display: flex;
  flex: 1;
  min-height: 0;
`;
const Scene = styled.svg`
  display: block;
  flex: 1;
  min-width: 0;
  height: 100%;
  background: #fff;
`;
const ViewFoot = styled.div`
  display: flex;
  flex: none;
  height: 17px;
  padding-right: 16px;
  & > div { flex: 1; }
`;

/* the pipe is shaded by strips laid between its outer and inner edge */
const outerEdge = [-6, 108, 396, 336, 432, 357, 500, 400, 508, 502];
const innerEdge = [-6, 175, 393, 404, 426, 424, 440, 455, 440, 502];
const shades = [
  [0, [14, 18, 26]], [0.08, [44, 53, 72]], [0.22, [88, 108, 142]], [0.4, [128, 157, 201]],
  [0.6, [180, 209, 248]], [0.7, [184, 212, 249]], [0.86, [150, 180, 223]], [1, [120, 147, 192]],
];
function shadeAt(t) {
  const i = Math.max(1, shades.findIndex(([s]) => s >= t));
  const [a, ca] = shades[i - 1];
  const [b, cb] = shades[i];
  return `rgb(${ca.map((v, k) => Math.round(v + ((cb[k] - v) * (t - a)) / (b - a))).join(",")})`;
}
const strips = Array.from({ length: 61 }, (_, i) => {
  const t = i / 60;
  const p = outerEdge.map((v, k) => (v + (innerEdge[k] - v) * t).toFixed(1));
  return { d: `M${p[0]} ${p[1]}L${p[2]} ${p[3]}C${p.slice(4).join(" ")}`, color: shadeAt(t) };
});

function Model() {
  return (
    <Scene viewBox="0 0 460 498" preserveAspectRatio="xMinYMin slice" role="img" aria-label="Piping model">
      <defs>
        <filter id="soft" x="-50%" y="-50%" width="200%" height="200%"><feGaussianBlur stdDeviation="5" /></filter>
      </defs>
      <g fontFamily="Liberation Sans, sans-serif" fontSize="11" fill="#c2542c"><text x="196" y="299">31</text></g>
      <path d="M57 206h7v10l5 2v9l-4 4h-9l-5-4v-9l6-2z" fill="#5f0f68" />
      <path d="M51 218l6-2h7l5 2-2 5-6 2-8-2z" fill="#8a2493" />
      <g fill="none" strokeWidth="2">{strips.map((s) => <path key={s.d} d={s.d} stroke={s.color} />)}</g>
      <path d="M385 352C415 368 445 400 450 470" fill="none" stroke="#fff" strokeWidth="12" opacity="0.650" filter="url(#soft)" />
      <g fontFamily="Liberation Sans, sans-serif" fontSize="11" fill="#d2283c">
        <text x="4" y="182">20</text><text x="310" y="358">40</text><text x="412" y="418">50</text>
      </g>
      <g>
        <path d="M397 338l10-18 7 3 11-6 3 5-11 7-2 9z" fill="#0a5a14" /><path d="M397 338l10-18 7 3 1 5z" fill="#0c7a1b" />
        <path d="M336 373l-19 1 2 5-12 8 3 5 14-6 4 5z" fill="#0b7d1c" /><path d="M336 373l-19 1 7 7z" fill="#1fa136" />
      </g>
      <g>
        <path d="M58 415c12 6 20 22 19 40-11 10-28 10-37 1 0-17 7-34 18-41z" fill="#c9c9c9" />
        <path d="M59 440l20-12" stroke="#a85a1e" strokeWidth="4" /><path d="M76 424l9 1-4 9-6-3z" fill="#c8691c" />
        <path d="M59 440V420" stroke="#18782a" strokeWidth="5" /><path d="M53 418c0-6 12-6 12 0l-6 6z" fill="#128a2a" />
        <path d="M59 440l-19 10" stroke="#8c1a14" strokeWidth="4" /><ellipse cx="38" cy="451" rx="4" ry="5" fill="#e5462c" />
        <path d="M59 440l19 10" stroke="#1420c8" strokeWidth="4" /><ellipse cx="79" cy="451" rx="4" ry="5" fill="#101c9c" />
        <g fontFamily="Liberation Sans, sans-serif" fontSize="13">
          <text x="54" y="404" fill="#28a745">Y</text><text x="83" y="420" fill="#b06a2a">N</text>
          <text x="27" y="454" fill="#9a3324">Z</text><text x="83" y="454" fill="#1b1b7a">X</text>
        </g>
      </g>
      <path d="M272.500 65.500v17l4-4 3 7 3-1-3-7h5z" fill="#fff" stroke="#222" strokeWidth="1.200" />
    </Scene>
  );
}

/* ---------- footer ---------- */

const StatusBar = styled.div`
  display: flex;
  align-items: center;
  flex: none;
  gap: 11px;
  height: 18px;
  padding: 0 7px 0 3px;
  background: #72a016;
  color: #eef6dc;
  font: 11px/16px ${uiFont};
`;
const StatusText = styled.span`
  flex: 1;
`;
const LockText = styled.span`
  color: #93b25a;
  font-size: 10px;
`;
const Banner = styled.footer`
  flex: none;
  height: 37px;
  padding: 0 13px;
  border-top: 4px solid #23284a;
  background: #40454f;
  color: #f3f5f8;
  font: 21px/25px Lato, sans-serif;
`;
const Credit = styled.p`
  position: absolute;
  right: 0;
  bottom: 0;
  min-width: 362px;
  height: 64px;
  margin: 0;
  padding: 0 17px;
  border-top-left-radius: 32px;
  background: #40454f;
  color: #f3f5f8;
  font: 21px/58px Lato, sans-serif;
  text-align: right;
  white-space: nowrap;
`;

export default function App() {
  return (
    <Shell>
      <Global />
      <TitleBar>
        <AppMark>C2</AppMark>
        <AppTitle>CAESAR II - [C:\USERS\HP\DESKTOP\UDEMY\UDEMY COURSE]</AppTitle>
        <WindowButton aria-label="Minimize"><Glyph $w={12} $h={12} viewBox="0 0 12 12"><path d="M2 8h8" stroke="#111" strokeWidth="2" /></Glyph></WindowButton>
        <WindowButton aria-label="Restore"><Glyph $w={12} $h={12} viewBox="0 0 12 12"><path d="M1 5h6v6H1zM4 5V2h6v6H7" fill="none" stroke="#111" strokeWidth="1.400" /></Glyph></WindowButton>
        <WindowButton aria-label="Close"><Glyph $w={12} $h={12} viewBox="0 0 12 12"><path d="M2 1l8 9M10 1l-8 9" stroke="#111" strokeWidth="2" /></Glyph></WindowButton>
      </TitleBar>
      <MenuBar>
        <MenuGrip />
        {["File", "Edit", "Model", "Environment", "Global", "Options", "View", "Tools", "Help"].map((m) => <MenuItem key={m}>{m}</MenuItem>)}
      </MenuBar>
      <ToolRow>
        <Tools items="new open save | cut copy paste | print v" />
        <Tools space={8} items="openPipe openBeam diskCheck v" />
        <Tools space={12} items="plt^ skyline^ v" />
        <Tools space={108} items="*loadUp^ *hatch^ *screen^ *delta^ forceGrey^ flangeGrey | disc valveBox^ bellowsGrey teeGrey | *axes^ *node10^ | ruler | beam | binoc v" />
        <Tools space={10} items="tag113 v" />
        <Tools space={10} items="spark refresh v" />
      </ToolRow>
      <ToolRow>
        <Tools items="list | docError^ run | pyramid pyramidBox | anchor v" />
        <Tools space={56} items="wave pipeAdd v" />
        <Tools space={81} items="gridPen boxOpen *teeDark v" />
        <Tools space={9} items="zoomAll zoomBox zoomArea | rotate orbit pan plusMinus | *cursor cursorBox | *cylSolid cylLines cylWire cylOpen cylDot bars v" />
        <Tools space={10} items="cubeFront cubeBack | cubeTop cubeBottom | cubeLeft cubeRight | cubeIso^ v" />
      </ToolRow>
      <Middle>
        <Rail><RailTools items={leftRail} /></Rail>
        <Center>
          <Workspace>
            <InputPanel>
              <PanelTitle>
                Classic Piping Input
                <Glyph $w={10} $h={12} viewBox="0 0 10 12"><path d="M3 1h4v6H3zM1 7h8M5 7v5M6 1v6" fill="none" stroke="#fff" strokeWidth="1.300" /></Glyph>
              </PanelTitle>
              <PanelBody>
                <Column $width={145} $gap={6}>
                  <Box $pad="3px 0 0">
                    <Expand>&gt;&gt;</Expand>
                    <NodeRow>
                      <Stack>
                        <Field label="From:" value="30" col={32} space={8} width={56} />
                        <Field label="To:" value="31" col={32} space={8} width={56} />
                      </Stack>
                      <Check text="Name" />
                    </NodeRow>
                  </Box>
                  <Box $pad="6px 0 4px" $gap={3}>
                    <Expand>&gt;&gt;</Expand>
                    <Field label="DX:" col={32} space={8} width={78} />
                    <Field label="DY:" value="-500.000 mm" col={32} space={8} width={78} />
                    <Field label="DZ:" col={32} space={8} width={78} />
                    <Check text="Offsets" indent={40} />
                  </Box>
                  <Box $pad="5px 0 3px" $gap={4}>
                    <Expand>&gt;&gt;</Expand>
                    <Field label="Diameter:" value="812.8000" col={59} space={3} width={56} />
                    <Field label="Wt/Sch:" value="9.5250" col={59} space={3} width={56} />
                    <Check text="Seam Welded" indent={40} />
                    <Field label="WI Factor:" value="1.0000" off col={59} space={3} width={56} />
                    <Field label="-Mill Tol %:" value="12.5000" col={59} space={3} width={56} />
                    <Field label="Corrosion:" col={59} space={3} width={56} />
                    <Field label="Pipe Den:" value="7833.43994" col={59} space={3} width={56} />
                    <Field label="Fluid Den 1:" value="1000.00000" col={59} space={3} width={56} />
                    <Field label="Fluid Den 2:" off col={59} space={3} width={56} />
                    <Field label="Hydro Den:" off col={59} space={3} width={56} />
                  </Box>
                  <Box $pad="9px 0 3px" $gap={1}>
                    <Expand>&gt;&gt;</Expand>
                    <Field label="Temp 1:" value="100.0000" col={59} space={3} width={56} />
                    <Field label="Temp 2:" value="200.0000" col={59} space={3} width={56} />
                    <Field label="Temp 3:" col={59} space={3} width={56} />
                    <Field label="Pressure 1:" value="6.0000" col={59} space={3} width={56} />
                    <Field label="Pressure 2:" value="10.0000" col={59} space={3} width={56} />
                  </Box>
                </Column>
                <Column $width={209} $gap={4}>
                  <Box $strong $pad="4px 0 1px 6px">
                    <CheckGrid>
                      <Check text="Bend" height={17} /><Check text="Reducer" height={17} />
                      <Check text="Rigid" height={17} on /><Check text="SIFs & Tees" height={17} />
                      <Check text="Expansion Joint" height={17} />
                    </CheckGrid>
                  </Box>
                  <Box $strong $pad="1px 0 0 6px">
                    <CheckGrid>
                      <Check text="Restraints" height={17} on /><Check text="Displacements" height={17} />
                      <Check text="Hangers" height={17} /><Check text="Flange Checks" height={17} />
                      <Check text="Nozzle Flex." height={17} /><Check text="Nozzle Lmt Check" height={17} />
                    </CheckGrid>
                  </Box>
                  <Box $strong $pad="0 0 0 6px">
                    <Check text="Forces/Moments" height={18} />
                    <Check text="Uniform Loads" height={18} />
                    <Check text="Wind / Wave" height={18} />
                  </Box>
                  <Box $pad="10px 0 2px" $gap={4}>
                    <Expand>&gt;&gt;</Expand>
                    <Field label="Material:" value="(102)A53 Grade B" select col={43} space={5} width={155} />
                    <Check text="Allowable Stress" indent={6} />
                  </Box>
                  <Box $pad="4px 0 7px" $gap={4}>
                    <Expand>&gt;&gt;</Expand>
                    <Field label="Elastic Modulus (C):" value="2.0340E+05" col={100} width={83} />
                    <Field label="Elastic Modulus (H1):" value="1.9816E+05" col={100} width={83} />
                    <Field label="Elastic Modulus (H2):" value="1.9132E+05" col={100} width={83} />
                    <Field label="Elastic Modulus (H3):" value="2.0340E+05" col={100} width={83} />
                    <Field label="Poisson's Ratio:" value="0.2920" col={100} width={83} />
                  </Box>
                  <Box $pad="3px 0 0" $gap={3}>
                    <Expand>&gt;&gt;</Expand>
                    <Field label="Refract Thk:" col={100} width={83} />
                    <Field label="Refract Density:" select col={100} width={100} />
                    <Field label="Insul Thk:" col={100} width={83} />
                    <Field label="Clad Thk:" col={100} width={83} />
                    <Box $pad="3px 0" $gap={3}>
                      <Field label="Insulation Density:" select col={99} width={100} />
                      <Field label="Cladding Density:" col={99} width={83} />
                    </Box>
                  </Box>
                </Column>
                <Column $width={314} $gap={10}>
                  <TabGroup>
                    <Expand>&gt;&gt;</Expand>
                    <TabStrip role="tablist">
                      {["es/Moments", "Hangers", "Node Names", "Nozzles", "Offsets", "Reducers", "Restraints"].map((t) => (
                        <Tab key={t} role="tab" $on={t === "Restraints"}>{t}</Tab>
                      ))}
                      <TabArrows>
                        <Glyph $w={6} $h={4} viewBox="0 0 6 4"><path d="M0 4h6L3 0z" fill="#777" /></Glyph>
                        <Caret color="#777" />
                      </TabArrows>
                    </TabStrip>
                    <TabPage>
                      <RestraintList>
                        <Restraint number={1} nodeValue="31" focus />
                        <Restraint number={2} />
                        <Restraint number={3} />
                        <Restraint number={4} />
                      </RestraintList>
                      <ScrollTrack>
                        <ScrollHead>
                          <Chevron d="M2 7l3-3 3 3" />
                          <Thumb $w={14} $h={40} />
                        </ScrollHead>
                        <Chevron d="M2 3l3 3 3-3" />
                      </ScrollTrack>
                    </TabPage>
                  </TabGroup>
                  <LineBox>
                    <Field label="Line Number:" value="unassigned" select col={78} width={217} />
                  </LineBox>
                </Column>
              </PanelBody>
            </InputPanel>
            <Viewer>
              <ViewTop>
                <Model />
                <ScrollTrack>
                  <ScrollHead>
                    <Thumb $w={14} $h={4} />
                    <Chevron d="M2 7l3-3 3 3" />
                    <Thumb $w={14} $h={16} />
                  </ScrollHead>
                  <Chevron d="M2 3l3 3 3-3" />
                </ScrollTrack>
              </ViewTop>
              <ViewFoot>
                <ScrollTrack $across>
                  <ScrollHead $across>
                    <Thumb $w={2} $h={15} />
                    <Chevron d="M7 2L4 5l3 3" />
                    <Thumb $w={16} $h={14} />
                  </ScrollHead>
                  <Chevron d="M3 2l3 3-3 3" />
                </ScrollTrack>
              </ViewFoot>
            </Viewer>
          </Workspace>
          <StatusBar>
            <StatusText>Ready</StatusText>
            <span>Driver: DirectX 11</span>
            <LockText>CAP</LockText><LockText>NUM</LockText><LockText>SCRL</LockText>
          </StatusBar>
        </Center>
        <Rail><RailTools items={rightRail} /></Rail>
      </Middle>
      <ToolRow>
        <Tools space={136} items="sheetNode sheetDelta sheetDot sheetTherm sheetCase sheetE sheetRho sheetWind v" />
        <Tools space={11} items="elbow^ *valve^ bellows^ reducer^ tee | *support screen^ flange deltaDark | force wind loads | slash measure nodesRed | valveEnd" />
      </ToolRow>
      <Banner>Check our Udemy channel :- Udemy.com/user/ismail-magdy-6/</Banner>
      <Credit>By : Eng. Ismail Magdy, M.Sc, PMP.</Credit>
    </Shell>
  );
}
